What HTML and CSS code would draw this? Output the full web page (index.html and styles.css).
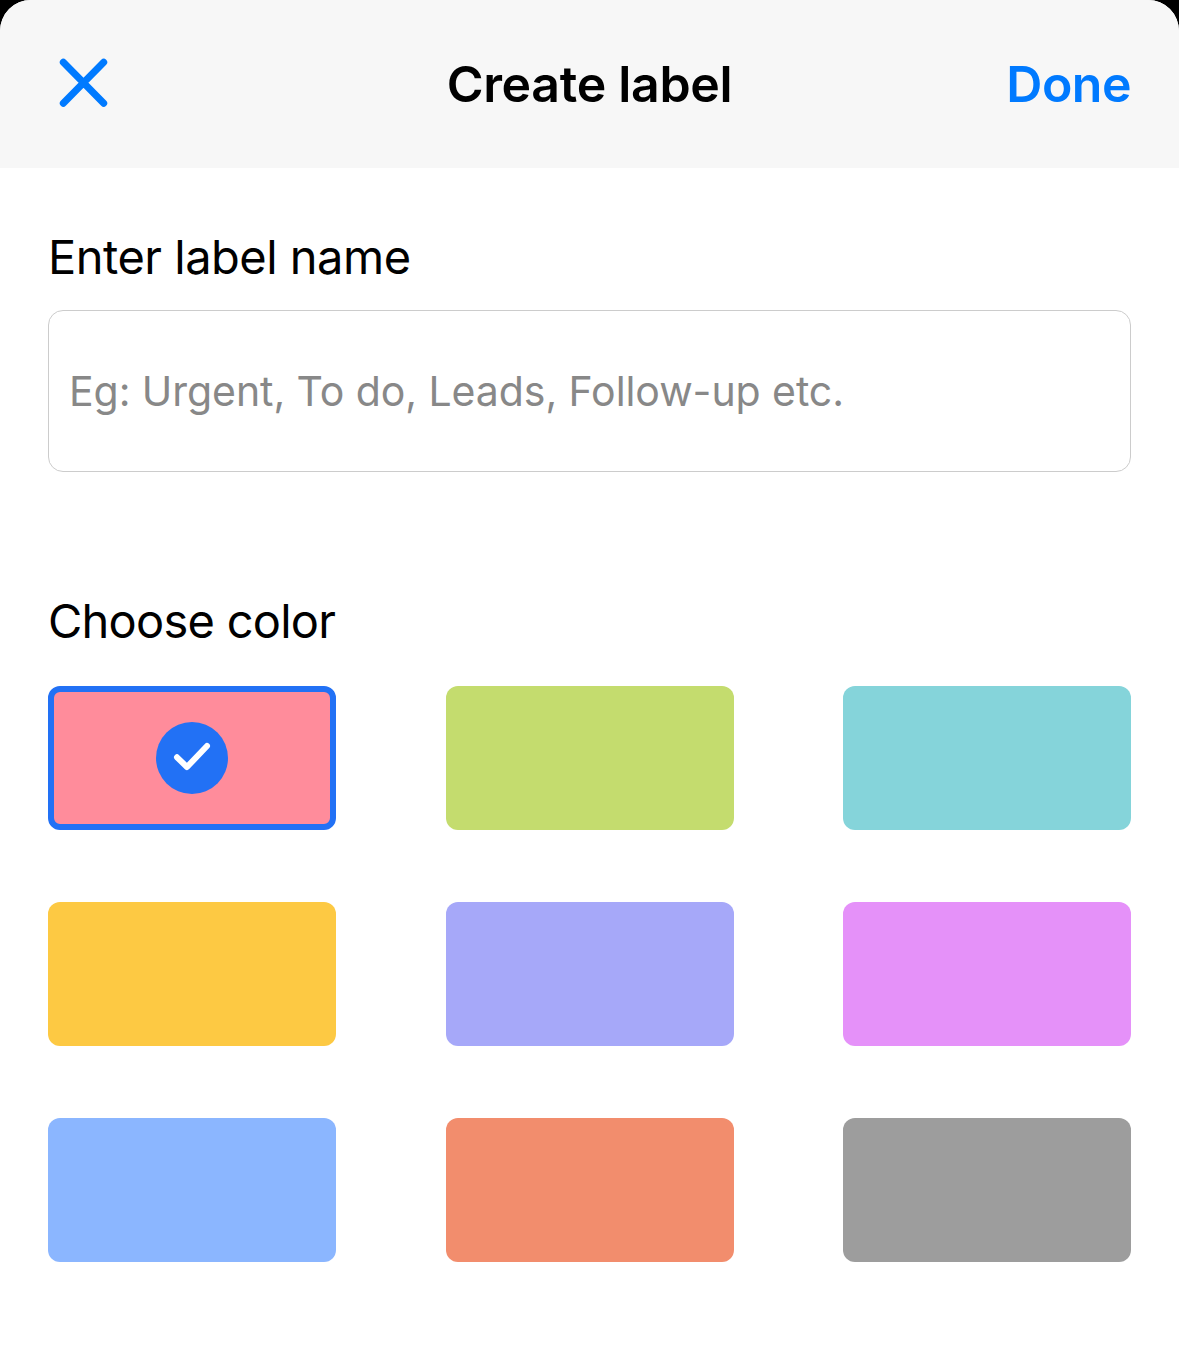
FILE: index.html
```html
<!DOCTYPE html>
<html lang="en">
<head>
  <meta charset="UTF-8">
  <title>Create label</title>
  <link rel="stylesheet" href="styles.css">
</head>
<body>
  <div class="sheet">
    <header class="header">
      <button class="close-button" type="button" aria-label="Close">
        <svg width="50" height="50" viewBox="0 0 50 50">
          <path d="M4.3 4.2L44.7 45.3M44.7 4.2L4.3 45.3" />
        </svg>
      </button>
      <h1 class="title">Create label</h1>
      <button class="done-button" type="button">Done</button>
    </header>

    <form class="content">
      <label class="field-label" for="labelName">Enter label name</label>
      <input class="name-input" type="text" id="labelName" placeholder="Eg: Urgent, To do, Leads, Follow-up etc.">

      <h2 class="field-label color-label">Choose color</h2>
      <div class="colors">
        <button class="color pink selected" type="button" aria-label="Pink">
          <svg width="72" height="72" viewBox="0 0 72 72">
            <circle cx="36" cy="36" r="36" />
            <path d="M21 35.3L31 45L51 24" />
          </svg>
        </button>
        <button class="color green" type="button" aria-label="Green"></button>
        <button class="color teal" type="button" aria-label="Teal"></button>
        <button class="color yellow" type="button" aria-label="Yellow"></button>
        <button class="color purple" type="button" aria-label="Purple"></button>
        <button class="color magenta" type="button" aria-label="Magenta"></button>
        <button class="color blue" type="button" aria-label="Blue"></button>
        <button class="color orange" type="button" aria-label="Orange"></button>
        <button class="color gray" type="button" aria-label="Gray"></button>
      </div>
    </form>
  </div>
</body>
</html>
```

FILE: styles.css
```css
* {
  box-sizing: border-box;
}
body {
  margin: 0;
  background-color: #000;
  font-family: Inter, sans-serif;
  color: #000;
}
button {
  padding: 0;
  border: none;
  background: none;
  font-family: inherit;
}
.sheet {
  min-height: 100vh;
  background-color: #fff;
  border-radius: 31px 31px 0 0;
  overflow: hidden;
}
/* Top bar */
.header {
  display: grid;
  grid-template-columns: 1fr auto 1fr;
  align-items: center;
  height: 168px;
  padding: 0 48px;
  background-color: #f7f7f7;
}
.close-button {
  justify-self: start;
  margin-left: 11px;
  margin-bottom: 2px;
  height: 50px;
}
.close-button svg {
  display: block;
  fill: none;
  stroke: #007aff;
  stroke-width: 7;
  stroke-linecap: round;
}
.title {
  margin: 0;
  font-size: 50px;
  font-weight: 600;
  letter-spacing: -0.3px;
}
.done-button {
  justify-self: end;
  color: #007aff;
  font-size: 50px;
  font-weight: 600;
  letter-spacing: -0.5px;
}
/* Form */
.content {
  padding: 59px 48px 0;
}
.field-label {
  display: block;
  margin: 0;
  font-size: 47px;
  font-weight: 400;
  line-height: 60px;
  letter-spacing: -0.5px;
}
.name-input {
  display: block;
  width: 100%;
  height: 162px;
  margin-top: 23px;
  padding: 0 20px;
  border: 1px solid #ccc;
  border-radius: 15px;
  font-family: inherit;
  font-size: 41px;
  letter-spacing: -0.07px;
}
.name-input::placeholder {
  color: #888;
}
.color-label {
  margin-top: 119px;
  letter-spacing: -0.75px;
}
/* Color swatches */
.colors {
  display: grid;
  grid-template-columns: repeat(3, 288px);
  justify-content: space-between;
  row-gap: 72px;
  margin-top: 35px;
}
.color {
  display: flex;
  justify-content: center;
  align-items: center;
  height: 144px;
  border-radius: 12px;
}
.selected {
  border: 6px solid #2271f5;
}
.selected circle {
  fill: #2271f5;
}
.selected path {
  fill: none;
  stroke: #fff;
  stroke-width: 6;
  stroke-linecap: round;
  stroke-linejoin: round;
}
.pink {
  background-color: #ff8c9b;
}
.green {
  background-color: #c4dc6e;
}
.teal {
  background-color: #85d4da;
}
.yellow {
  background-color: #fdc943;
}
.purple {
  background-color: #a6a8f9;
}
.magenta {
  background-color: #e591f9;
}
.blue {
  background-color: #8bb6ff;
}
.orange {
  background-color: #f28d6d;
}
.gray {
  background-color: #9d9d9d;
}
```
